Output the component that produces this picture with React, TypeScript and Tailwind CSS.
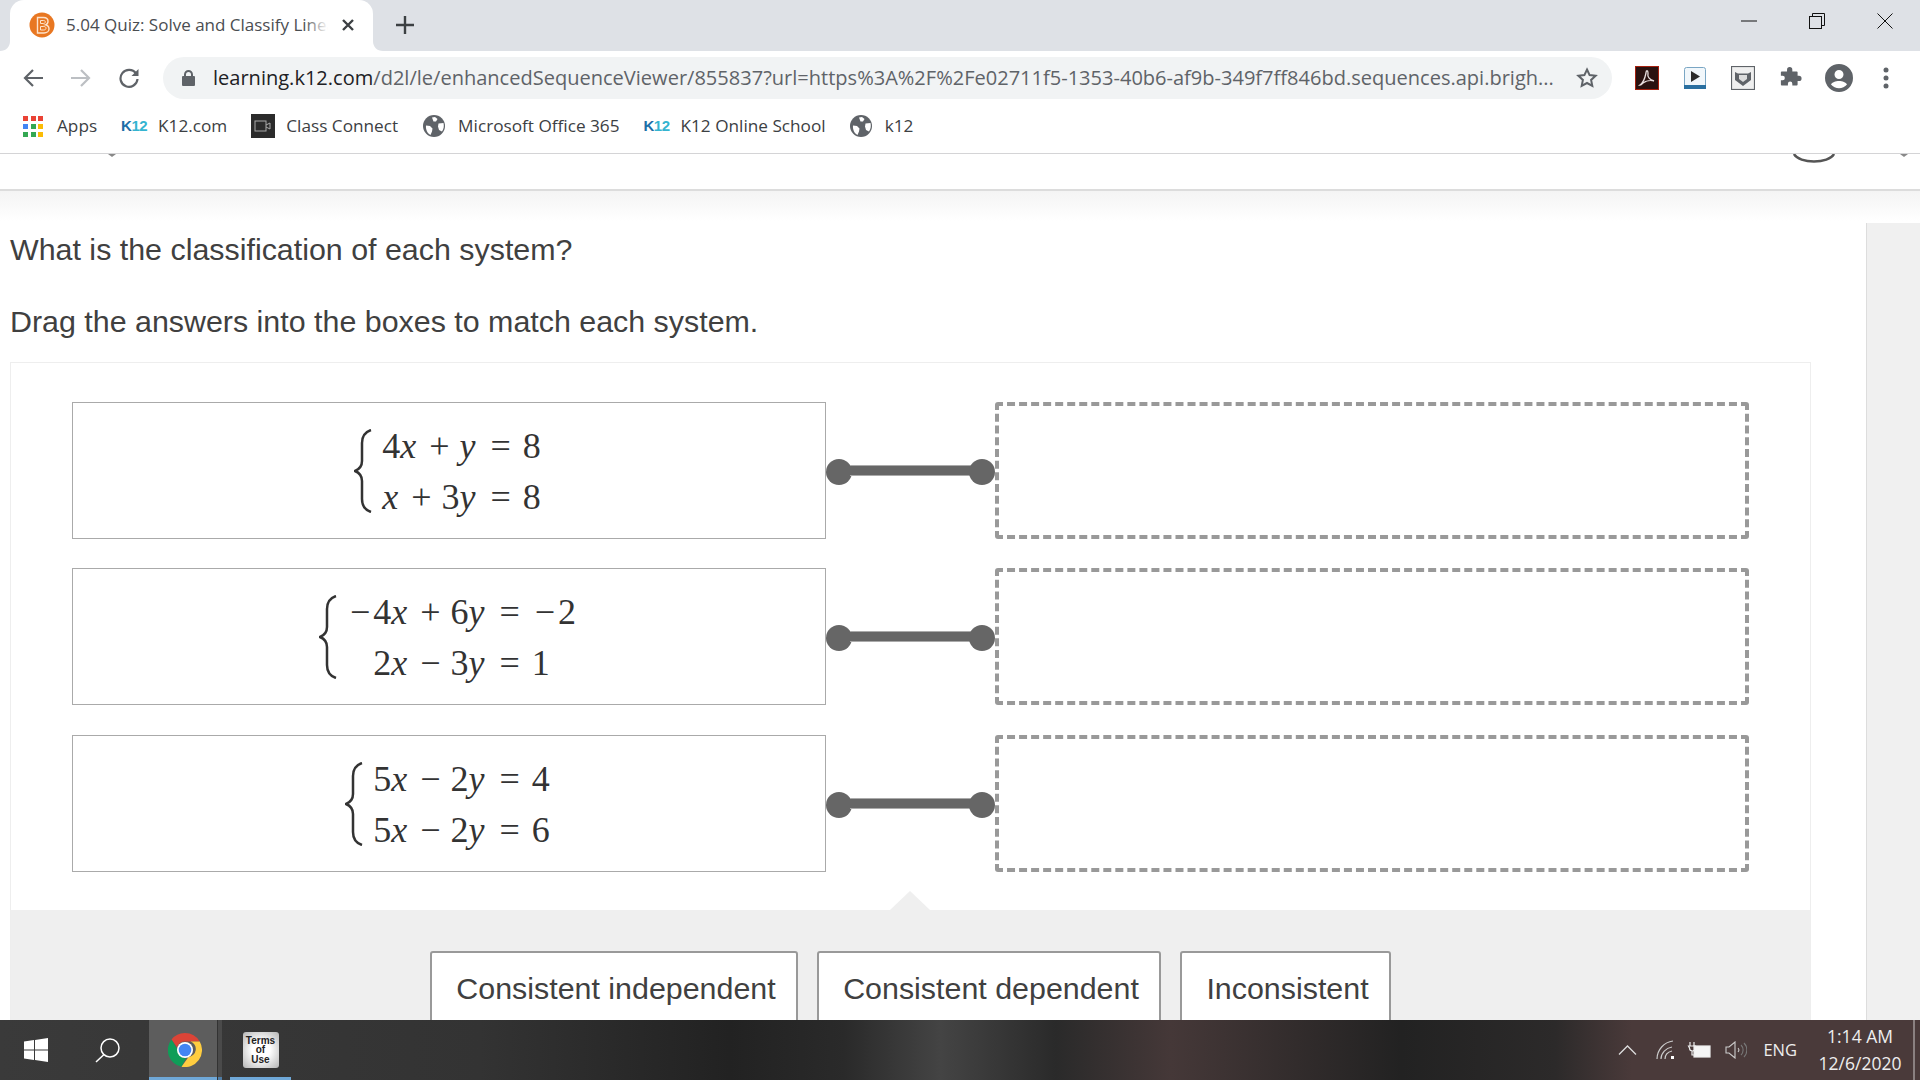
const BOOKMARKS = [
  { label: "K12.com", icon: "k12", ml: "ml-[24px]", gap: "gap-[11px]" },
  { label: "Class Connect", icon: "cam", ml: "ml-[24px]", gap: "gap-[11px]" },
  { label: "Microsoft Office 365", icon: "globe", ml: "ml-[25px]", gap: "gap-[13px]" },
  { label: "K12 Online School", icon: "k12", ml: "ml-[24px]", gap: "gap-[11px]" },
  { label: "k12", icon: "globe", ml: "ml-[24px]", gap: "gap-[13px]" },
];

const SYSTEMS = [
  { lines: ["4x + y = 8", "x + 3y = 8"], align: "items-start", mt: "" },
  { lines: ["−4x + 6y = −2", "2x − 3y = 1"], align: "items-center", mt: "" },
  { lines: ["5x − 2y = 4", "5x − 2y = 6"], align: "items-start", mt: "mt-[1px]" },
];

const ANSWERS = [
  { label: "Consistent independent", w: "w-[368px]" },
  { label: "Consistent dependent", w: "w-[344px]" },
  { label: "Inconsistent", w: "w-[211px]" },
];

function BookmarkIcon({ kind }: { kind: string }) {
  if (kind === "k12") {
    return (
      <span className="w-[26px] text-center font-['Liberation_Sans',sans-serif] text-[15px] font-bold tracking-[-0.5px]">
        <span className="text-[#1c6fa8]">K</span>
        <span className="text-[#35b4d0]">12</span>
      </span>
    );
  }
  if (kind === "cam") {
    return (
      <span className="flex h-[24px] w-[24px] items-center justify-center bg-[#2b2b2b]">
        <svg width="18" height="12" viewBox="0 0 18 12" fill="none" stroke="#aaa" strokeWidth="1">
          <rect x="1" y="1" width="11" height="10" />
          <path d="M12 5l4-2v6l-4-2" />
        </svg>
      </span>
    );
  }
  return (
    <svg width="22" height="22" viewBox="0 0 22 22">
      <circle cx="11" cy="11" r="11" fill="#5f6368" />
      <path d="M9 2.500l3-.5 2.500 2-1.500 2.500-2.500 0zM15.500 8.500l5-.5c.7 3 .3 6-1.500 8.500l-3-1.500-1-3.500zM3 10.500l4 .5 2.500 2.500-.5 3-1.500 3.500C4.500 18.500 2.500 14.500 3 10.500z" fill="#fff" />
    </svg>
  );
}

function AppsIcon() {
  const colors = ["#ea4335", "#ea4335", "#ea4335", "#4285f4", "#34a853", "#fbbc05", "#34a853", "#34a853", "#fbbc05"];
  return (
    <div className="grid w-[20px] grid-cols-3 gap-[3px]">
      {colors.map((c, i) => (
        <svg key={i} width="5" height="5" viewBox="0 0 5 5">
          <rect width="5" height="5" fill={c} />
        </svg>
      ))}
    </div>
  );
}

function TabStrip() {
  return (
    <div className="flex h-[51px] shrink-0 items-end bg-[#dee1e6] pl-[10px]">
      <div className="relative flex h-[51px] w-[363px] items-center rounded-t-[14px] bg-white pb-[2px] pl-[19px]">
        <svg className="absolute bottom-0 left-[-10px]" width="10" height="10" viewBox="0 0 10 10">
          <path d="M10 0v10H0c6 0 10-4 10-10z" fill="#fff" />
        </svg>
        <svg className="absolute bottom-0 right-[-10px]" width="10" height="10" viewBox="0 0 10 10">
          <path d="M0 0v10h10C4 10 0 6 0 0z" fill="#fff" />
        </svg>
        <svg width="26" height="26" viewBox="0 0 26 26" fill="none">
          <circle cx="13" cy="13" r="12.500" fill="#e87722" />
          <path d="M8.500 5.500h6c3 0 4.500 1.800 4.500 3.800 0 1.700-1 3-2.500 3.500 2 .5 3.500 2 3.500 4.200 0 2.200-2 4-5 4h-6.500z" stroke="#fde3cc" strokeWidth="1.400" />
          <path d="M11.500 8.500h3c1.300 0 1.800.6 1.800 1.500s-.7 1.500-2 1.500h-2.800zM11.500 14.500h3.300c1.500 0 2.200.7 2.200 1.700s-.9 1.800-2.400 1.800h-3.100z" stroke="#fde3cc" strokeWidth="1" />
        </svg>
        <div className="relative ml-[11px] w-[262px] overflow-hidden whitespace-nowrap font-['Open_Sans',sans-serif] text-[17px] text-[#4a4d51]">
          5.04 Quiz: Solve and Classify Linear Systems
          <div className="absolute inset-y-0 right-0 w-[24px] bg-gradient-to-r from-white/0 to-white" />
        </div>
        <svg className="ml-[13px]" width="14" height="14" viewBox="0 0 14 14" stroke="#3c4043" strokeWidth="2.400">
          <path d="M2 2l10 10M12 2L2 12" />
        </svg>
      </div>
      <svg className="mb-[17px] ml-[23px]" width="18" height="18" viewBox="0 0 18 18" stroke="#3c4043" strokeWidth="2.400">
        <path d="M9 0v18M0 9h18" />
      </svg>
      <div className="mb-[15px] ml-auto flex items-center">
        <div className="flex h-[30px] w-[68px] items-center justify-center">
          <svg width="16" height="2" viewBox="0 0 16 2"><path d="M0 1h16" stroke="#111" strokeWidth="1" /></svg>
        </div>
        <div className="flex h-[30px] w-[68px] items-center justify-center">
          <svg width="16" height="16" viewBox="0 0 16 16" fill="none" stroke="#111" strokeWidth="1">
            <rect x="0.500" y="3.500" width="12" height="12" />
            <path d="M3.500 3.500v-3h12v12h-3" />
          </svg>
        </div>
        <div className="mr-[1px] flex h-[30px] w-[68px] items-center justify-center">
          <svg width="16" height="16" viewBox="0 0 16 16" stroke="#111" strokeWidth="1">
            <path d="M0.500 0.500l15 15M15.500 0.500l-15 15" />
          </svg>
        </div>
      </div>
    </div>
  );
}

function Toolbar() {
  return (
    <div className="flex h-[51px] shrink-0 items-center bg-white pl-[9px] pt-[2px]">
      <div className="flex w-[48px] justify-center">
        <svg width="22" height="20" viewBox="0 0 22 20" fill="none" stroke="#5f6368" strokeWidth="2.200">
          <path d="M21 10H3M11 2l-8 8 8 8" />
        </svg>
      </div>
      <div className="flex w-[48px] justify-center">
        <svg width="22" height="20" viewBox="0 0 22 20" fill="none" stroke="#bcbfc3" strokeWidth="2.200">
          <path d="M1 10h18M11 2l8 8-8 8" />
        </svg>
      </div>
      <div className="flex w-[48px] justify-center">
        <svg width="22" height="22" viewBox="0 0 22 22" fill="none">
          <path d="M18 6.500A8.500 8.500 0 1 0 19.500 12" stroke="#5f6368" strokeWidth="2.200" />
          <path d="M20.500 2v7h-7z" fill="#5f6368" />
        </svg>
      </div>
      <div className="ml-[10px] flex h-[42px] w-[1449px] items-center rounded-full bg-[#f1f3f4] pl-[19px]">
        <svg width="13" height="16" viewBox="0 0 13 16" fill="#5f6368">
          <path d="M2 6V4.500a4.500 4.500 0 0 1 9 0V6h1a1 1 0 0 1 1 1v8a1 1 0 0 1-1 1H1a1 1 0 0 1-1-1V7a1 1 0 0 1 1-1zm2 0h5V4.500a2.500 2.500 0 0 0-5 0z" />
        </svg>
        <div className="ml-[18px] w-[1340px] whitespace-nowrap pt-[1px] font-['Open_Sans',sans-serif] text-[20.050px] text-[#5f6368]">
          <span className="text-[#202124]">learning.k12.com</span>/d2l/le/enhancedSequenceViewer/855837?url=https%3A%2F%2Fe02711f5-1353-40b6-af9b-349f7ff846bd.sequences.api.brigh...
        </div>
        <svg className="ml-[23px]" width="22" height="21" viewBox="0 0 22 21" fill="none" stroke="#5f6368" strokeWidth="2">
          <path d="M11 2.500l2.600 5.600 6 .7-4.500 4.100 1.200 6L11 16l-5.300 2.900 1.200-6L2.400 8.800l6-.7z" />
        </svg>
      </div>
      <svg className="ml-[23px]" width="24" height="24" viewBox="0 0 24 24" fill="none">
        <rect x="0.500" y="0.500" width="23" height="23" fill="#2a1210" stroke="#a5200f" />
        <path d="M5 19c3-2 5-7 6-12 0-3 2-3 2 0-1 4 2 7 6 8-3-1-8 0-11 2-1 1-2 2-3 2z" stroke="#e8dede" strokeWidth="1.300" />
      </svg>
      <svg className="ml-[25px]" width="22" height="22" viewBox="0 0 22 22">
        <rect x="0.500" y="0.500" width="21" height="21" rx="2" fill="#f1f7fb" stroke="#7aa6c4" />
        <rect x="0" y="18" width="22" height="4" fill="#2a6fa0" />
        <path d="M7 4l9 5.500L7 15z" fill="#2b2b2b" />
      </svg>
      <svg className="ml-[25px]" width="24" height="24" viewBox="0 0 24 24" fill="none">
        <rect x="0.500" y="0.500" width="23" height="23" fill="#efefef" stroke="#5f6368" strokeWidth="1.200" />
        <path d="M4 6l3 1.500h10L20 6v8l-8 6-8-6z" fill="#5f6368" />
        <path d="M8 9h8v4l-4 3-4-3z" fill="#dcdcdc" />
      </svg>
      <svg className="ml-[25px]" width="22" height="22" viewBox="0 0 25 25" fill="#5f6368">
        <path d="M8 3a3 3 0 0 1 6 0v2h5a1 1 0 0 1 1 1v4h1.500a3 3 0 0 1 0 6H20v4a1 1 0 0 1-1 1h-5v-2a2.500 2.500 0 0 0-5 0v2H2a1 1 0 0 1-1-1v-5h2a2.500 2.500 0 0 0 0-5H1V6a1 1 0 0 1 1-1h6z" />
      </svg>
      <svg className="ml-[23px]" width="28" height="28" viewBox="0 0 28 28" fill="#5f6368">
        <path fillRule="evenodd" d="M14 0a14 14 0 1 1 0 28 14 14 0 0 1 0-28zm0 6a4.500 4.500 0 1 0 0 9 4.500 4.500 0 0 0 0-9zm0 11c-3.500 0-7 1.500-8 3.500a10.500 10.500 0 0 0 16 0c-1-2-4.500-3.500-8-3.500z" />
      </svg>
      <svg className="ml-[30px]" width="6" height="22" viewBox="0 0 6 22" fill="#5f6368">
        <circle cx="3" cy="3" r="2.500" />
        <circle cx="3" cy="11" r="2.500" />
        <circle cx="3" cy="19" r="2.500" />
      </svg>
    </div>
  );
}

function Bookmarks() {
  return (
    <div className="flex h-[52px] shrink-0 items-center border-b border-[#d4d4d6] bg-white pb-[3px] pl-[23px] font-['Open_Sans',sans-serif] text-[17.200px] text-[#3c4043]">
      <AppsIcon />
      <span className="ml-[14px]">Apps</span>
      {BOOKMARKS.map((b) => (
        <div key={b.label + b.icon} className={`flex items-center ${b.gap} ${b.ml}`}>
          <BookmarkIcon kind={b.icon} />
          <span>{b.label}</span>
        </div>
      ))}
    </div>
  );
}

function Eq({ text }: { text: string }) {
  const tokens = text.split(" ");
  return (
    <div className="flex h-[51px] items-center whitespace-nowrap">
      {tokens.map((t, i) => {
        if (t === "+" || t === "−" || t === "=") {
          return (
            <span key={i} className={t === "=" ? "mx-[12px]" : "mx-[10px]"}>
              {t}
            </span>
          );
        }
        return (
          <span key={i}>
            {t.split("").map((c, j) => {
              if (c === "x" || c === "y") {
                return <i key={j} className="pr-[3px]">{c}</i>;
              }
              if (c === "−") {
                return <span key={j} className="px-[3px]">{c}</span>;
              }
              return <span key={j}>{c}</span>;
            })}
          </span>
        );
      })}
    </div>
  );
}

function Brace() {
  return (
    <svg width="18" height="84" viewBox="0 0 18 84" fill="none" stroke="#333" strokeWidth="2.500">
      <path d="M17 1C11 3 8 7 8 14v18c0 5-2 8-7 10 5 2 7 5 7 10v18c0 7 3 11 9 13" />
    </svg>
  );
}

function Connector() {
  return (
    <div className="flex w-[169px] items-center">
      <div className="mt-[3px] h-[26px] w-[26px] shrink-0 rounded-full bg-[#666]" />
      <div className="mx-[-2px] h-[11px] flex-1 border-y border-[#aaa] bg-[#666]" />
      <div className="mt-[3px] h-[26px] w-[26px] shrink-0 rounded-full bg-[#666]" />
    </div>
  );
}

function Row({ lines, align, mt }: { lines: string[]; align: string; mt: string }) {
  return (
    <div className={`flex h-[137px] ${mt}`}>
      <div className="flex w-[754px] items-center justify-center border border-[#aaa] bg-white pr-[3px] font-['Liberation_Serif',serif] text-[36px] text-[#333]">
        <Brace />
        <div className={`ml-[10px] flex flex-col pt-[2px] ${align}`}>
          {lines.map((l) => (
            <Eq key={l} text={l} />
          ))}
        </div>
      </div>
      <Connector />
      <div className="w-[754px] rounded-[3px] border-4 border-dashed border-[#999] bg-white" />
    </div>
  );
}

function Taskbar() {
  return (
    <div className="flex h-[60px] shrink-0 items-stretch bg-[linear-gradient(90deg,#3a3a3a_0%,#333_25%,#222_38%,#2a2a2a_44%,#444_49%,#2a2a2a_55%,#453838_61%,#222_73%,#2c2a2a_81%,#4a3a3a_85%,#4a3a3a_100%)] text-white">
      <div className="flex w-[149px] items-center">
        <svg className="ml-[24px]" width="24" height="24" viewBox="0 0 24 24" fill="#fff">
          <path d="M0 3.500l10-1.400v9.300H0zM11 2l13-2v11.400H11zM0 12.500h10v9.400L0 20.500zM11 12.500h13V24l-13-2z" />
        </svg>
        <svg className="ml-[47px]" width="25" height="25" viewBox="0 0 25 25" fill="none" stroke="#fff" strokeWidth="1.500">
          <circle cx="15" cy="10" r="9" />
          <path d="M9 16.500L1 24" />
        </svg>
      </div>
      <div className="flex w-[68px] flex-col bg-[#5d5d5d]">
        <div className="flex flex-1 items-center justify-center pl-[4px] pt-[3px]">
          <svg width="34" height="34" viewBox="0 0 34 34">
            <path d="M17 0a17 17 0 0 1 14.700 8.500H17a8.500 8.500 0 0 0-8 5.700L3.500 6.500A17 17 0 0 1 17 0z" fill="#db4437" />
            <path d="M3.500 6.500L10 17.500a8 8 0 0 0 8 7.800l-4.500 8.400A17 17 0 0 1 3.500 6.500z" fill="#0f9d58" />
            <path d="M31.700 8.500A17 17 0 0 1 13.500 33.700L20.500 24a8 8 0 0 0 2-15.500z" fill="#ffcd40" />
            <circle cx="17" cy="17" r="8" fill="#fff" />
            <circle cx="17" cy="17" r="6.300" fill="#4285f4" />
          </svg>
        </div>
        <div className="h-[3px] bg-[#6fa8d8]" />
      </div>
      <div className="flex w-[5px] flex-col border-l border-[#333] bg-[#4a4a4a]">
        <div className="flex-1" />
        <div className="h-[3px] bg-[#4f7ea8]" />
      </div>
      <div className="ml-[8px] flex w-[61px] flex-col">
        <div className="flex flex-1 items-center justify-center pt-[3px]">
          <div className="flex h-[36px] w-[36px] flex-col items-center justify-center rounded-[3px] bg-[radial-gradient(circle,#ffffff_35%,#b5b5b5_100%)] font-['Liberation_Sans',sans-serif] text-[10px] leading-[9.500px] font-bold text-[#222]">
            <span>Terms</span>
            <span>of</span>
            <span>Use</span>
          </div>
        </div>
        <div className="h-[3px] bg-[#6fa8d8]" />
      </div>
      <div className="ml-auto flex items-center font-['Open_Sans',sans-serif] text-[#eee]">
        <svg className="mr-[19px]" width="19" height="10" viewBox="0 0 19 10" fill="none" stroke="#ddd" strokeWidth="1.300">
          <path d="M1 9.500L9.500 1 18 9.500" />
        </svg>
        <svg className="mr-[11px]" width="20" height="20" viewBox="0 0 20 20" fill="none" stroke="#ccc" strokeWidth="1.200">
          <path d="M1 19C1 10 8 2 17 1M5 19c0-6 5-11 11-12M9 19c0-4 3-7 7-8" />
          <rect x="15" y="16" width="3" height="3" fill="#fff" stroke="none" />
        </svg>
        <svg className="mr-[14px]" width="24" height="18" viewBox="0 0 24 18" fill="none" stroke="#eee" strokeWidth="1.200">
          <path d="M3 1v4M7 1v4M1.500 5h7v2a3 3 0 0 1-6 0zM5 10v4h2" />
          <rect x="7" y="5" width="16" height="11" fill="#f5f5f5" />
        </svg>
        <svg className="mr-[16px]" width="22" height="18" viewBox="0 0 22 18" fill="none" stroke="#ccc" strokeWidth="1.100">
          <path d="M1 6h3l6-5v16l-6-5H1zM13 7a3 3 0 0 1 0 4" />
          <path d="M16 4a7 7 0 0 1 0 10M19 2a10 10 0 0 1 0 14" stroke="#777" />
        </svg>
        <span className="mr-[16px] text-[16.500px]">ENG</span>
        <div className="mr-[6px] flex w-[94px] flex-col items-center text-[17.500px] leading-[27px]">
          <span>1:14 AM</span>
          <span>12/6/2020</span>
        </div>
        <div className="h-full w-[2px] bg-[#8a8080]" />
        <div className="w-[5px]" />
      </div>
    </div>
  );
}

export default function App() {
  return (
    <div className="flex h-screen w-full flex-col overflow-hidden bg-white">
      <TabStrip />
      <Toolbar />
      <Bookmarks />
      <div className="flex h-[37px] shrink-0 overflow-hidden border-b-2 border-[#dcdcdc]">
        <svg className="ml-[108px]" width="8" height="4" viewBox="0 0 8 4" fill="#888">
          <path d="M0 0h8L4 3z" />
        </svg>
        <svg className="ml-auto" width="44" height="10" viewBox="0 0 44 10" fill="none" stroke="#555" strokeWidth="2.500">
          <path d="M2 0c5 10 35 10 40 0" />
        </svg>
        <svg className="ml-[64px] mr-[12px]" width="8" height="4" viewBox="0 0 8 4" fill="#888">
          <path d="M0 0h8L4 3z" />
        </svg>
      </div>
      <div className="flex min-h-0 flex-1 bg-gradient-to-b from-[#f4f4f4] to-white to-[30px] bg-no-repeat">
        <div className="flex w-[1866px] min-w-0 flex-col overflow-hidden pl-[10px] font-['Liberation_Sans',sans-serif] text-[#404040]">
          <p className="mt-[40px] text-[30.400px] leading-[36px]">What is the classification of each system?</p>
          <p className="mt-[36px] text-[30.400px] leading-[36px]">Drag the answers into the boxes to match each system.</p>
          <div className="mt-[23px] flex w-[1801px] flex-1 flex-col border-x border-t border-[#eee] bg-white">
            <div className="flex flex-col gap-[29px] pb-[38px] pl-[61px] pt-[39px]">
              {SYSTEMS.map((s) => (
                <Row key={s.lines[0]} lines={s.lines} align={s.align} mt={s.mt} />
              ))}
            </div>
            <div className="relative flex flex-1 items-start gap-[19px] bg-[#efefef] pl-[419px] pt-[41px]">
              <div className="absolute left-[879px] top-[-19px] h-0 w-0 border-x-[20px] border-b-[19px] border-x-transparent border-b-[#efefef]" />
              {ANSWERS.map((a) => (
                <div
                  key={a.label}
                  className={`flex h-[76px] shrink-0 items-center justify-center rounded-t-[3px] border-2 border-[#999] bg-white pl-[4px] text-[30.400px] ${a.w}`}
                >
                  {a.label}
                </div>
              ))}
            </div>
          </div>
        </div>
        <div className="mt-[32px] flex-1 border-l border-[#ddd] bg-[#f0f0f0]" />
      </div>
      <Taskbar />
    </div>
  );
}
